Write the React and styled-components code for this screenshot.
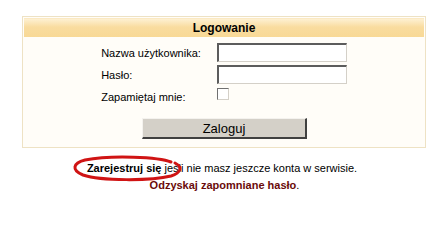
import React from 'react';
import styled, { createGlobalStyle } from 'styled-components';

const GlobalStyle = createGlobalStyle`
  body {
    margin: 0;
    background: #fff;
    font-family: 'Liberation Sans', Arial, sans-serif;
    color: #000;
  }
`;

const Page = styled.div`
  width: 444px;
  height: 204px;
  padding-top: 16px;
  box-sizing: border-box;
  overflow: hidden;
`;

const Panel = styled.div`
  margin-left: 22px;
  width: 404px;
  box-sizing: border-box;
  border: 1px solid #eee2c4;
  background: #fffdf8;
  padding: 1px 1px 8px;
`;

const PanelHeader = styled.div`
  height: 18px;
  background: linear-gradient(#fdf0d2, #f9dc9f 45%, #f8d996);
  border-top: 1px solid #fbe9c4;
  display: flex;
  align-items: center;
  justify-content: center;
  font-size: 12px;
  font-weight: bold;
`;

const Form = styled.div`
  display: grid;
  grid-template-columns: auto 130px;
  grid-auto-rows: 19px;
  column-gap: 16px;
  row-gap: 3px;
  justify-content: center;
  align-items: center;
  margin-top: 6px;
  font-size: 11px;
`;

const Label = styled.label`
  white-space: nowrap;
`;

const TextInput = styled.input`
  width: 130px;
  height: 19px;
  box-sizing: border-box;
  margin: 0;
  padding: 0 2px;
  background: #fff;
  border-style: solid;
  border-width: 2px 1px 1px 2px;
  border-color: #5c5c5c #d4d0c8 #d4d0c8 #5c5c5c;
  outline: none;
`;

const CheckBox = styled.span`
  display: block;
  width: 12px;
  height: 12px;
  box-sizing: border-box;
  align-self: start;
  margin-top: 1px;
  background: #fff;
  border-style: solid;
  border-width: 1px;
  border-color: #707070 #d4d0c8 #d4d0c8 #707070;
`;

const ButtonRow = styled.div`
  display: flex;
  justify-content: center;
  margin-top: 12px;
`;

const Button = styled.button`
  width: 165px;
  height: 21px;
  box-sizing: border-box;
  margin: 0 0 0 1px;
  padding: 0;
  background: #d4d0c8;
  border-style: solid;
  border-width: 1px 2px 2px 1px;
  border-color: #f4f2ee #404040 #404040 #f4f2ee;
  font-family: 'Liberation Sans', Arial, sans-serif;
  font-size: 13px;
  color: #000;
`;

const Footer = styled.div`
  margin-top: 12px;
  text-align: center;
  font-size: 11px;
  line-height: 17px;
`;

const Line = styled.div`
  padding-left: ${({ shift }) => shift || 0}px;
`;

const Register = styled.a`
  position: relative;
  font-weight: bold;
  color: #000;
  text-decoration: none;
`;

const Recover = styled.a`
  font-weight: bold;
  color: #6a0a0a;
  text-decoration: none;
`;

const Circle = styled.svg`
  position: absolute;
  left: -16px;
  top: -8px;
  pointer-events: none;
  overflow: visible;
`;

export default function App() {
  return (
    <Page>
      <GlobalStyle />
      <Panel>
        <PanelHeader>Logowanie</PanelHeader>
        <Form>
          <Label>Nazwa użytkownika:</Label>
          <TextInput type="text" />
          <Label>Hasło:</Label>
          <TextInput type="password" />
          <Label>Zapamiętaj mnie:</Label>
          <CheckBox />
        </Form>
        <ButtonRow>
          <Button>Zaloguj</Button>
        </ButtonRow>
      </Panel>
      <Footer>
        <Line shift={0}>
          <Register href="#">
            Zarejestruj się
            <Circle width="112" height="32" viewBox="0 0 112 32">
              <path
                d="M100 8 C 88 3, 40 1, 14 6 C 2 9, 0 16, 12 21 C 30 27, 80 27, 100 22 C 110 19, 112 13, 104 9"
                fill="none"
                stroke="#d01414"
                strokeWidth="3"
                strokeLinecap="round"
              />
            </Circle>
          </Register>{' '}
          jeśli nie masz jeszcze konta w serwisie.
        </Line>
        <Line shift={5}>
          <Recover href="#">Odzyskaj zapomniane hasło</Recover>.
        </Line>
      </Footer>
    </Page>
  );
}
